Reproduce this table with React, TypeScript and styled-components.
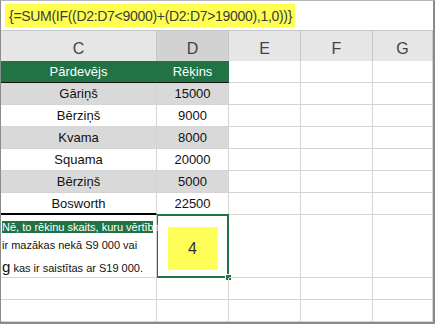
import React from 'react';
import styled, { createGlobalStyle } from 'styled-components';

type Fill = 'none' | 'band' | 'green';
type Rule = 'grid' | 'dark' | 'thick';

const GREEN = '#217346';
const GRID = '#d4d4d4';

const GlobalStyle = createGlobalStyle`
    html, body {
        margin: 0;
        padding: 0;
        background: #ffffff;
    }
    body {
        font-family: 'Liberation Sans', Arial, sans-serif;
    }
`;

const Frame = styled.div`
    width: 435px;
    height: 324px;
    box-sizing: border-box;
    border-left: 1px solid #8c8c8c;
    border-top: 1px solid #b4b4b4;
    border-right: 2px solid #8a8a8a;
    border-bottom: 2px solid #8a8a8a;
    display: flex;
    flex-direction: column;
    background: #ffffff;
    overflow: hidden;
`;

const FormulaBar = styled.div`
    height: 30px;
    box-sizing: border-box;
    border-bottom: 1px solid #c6c6c6;
    padding: 3px 0 0 4px;
`;

const Formula = styled.span`
    display: inline-flex;
    align-items: center;
    height: 23px;
    padding: 0 3px 0 4px;
    background: #ffff4f;
    color: #3c3c3c;
    font-size: 14px;
    letter-spacing: -0.3px;
    white-space: nowrap;
`;

const Sheet = styled.div`
    display: grid;
    grid-template-columns: 156px 72px 72px 72px 1fr;
    grid-template-rows: 30px 22px repeat(6, 22px) 63px 22px 22px;
`;

const ColHeader = styled.div<{ $active?: boolean }>`
    box-sizing: border-box;
    display: flex;
    justify-content: center;
    align-items: center;
    padding-top: 6px;
    background: ${({ $active }) => ($active ? '#d2d2d2' : '#e6e6e6')};
    border-right: 1px solid #c8c8c8;
    color: #444444;
    font-size: 16px;
`;

const Cell = styled.div<{ $fill?: Fill; $rule?: Rule; $bold?: boolean }>`
    box-sizing: border-box;
    display: flex;
    justify-content: center;
    align-items: center;
    position: relative;
    font-size: 13px;
    color: ${({ $fill }) => ($fill === 'green' ? '#ffffff' : '#111111')};
    background: ${({ $fill }) => ($fill === 'band' ? '#d9d9d9' : $fill === 'green' ? GREEN : 'transparent')};
    border-right: 1px solid ${({ $fill }) => ($fill === 'green' ? GREEN : GRID)};
    border-bottom: ${({ $rule }) =>
        $rule === 'thick' ? '2px solid #000000' : $rule === 'dark' ? '1px solid #111111' : `1px solid ${GRID}`};
`;

const Note = styled.div`
    box-sizing: border-box;
    display: flex;
    flex-direction: column;
    padding: 6px 0 0 1px;
    border-right: 1px solid ${GRID};
    border-bottom: 1px solid ${GRID};
    font-size: 11px;
    color: #111111;
    position: relative;
    z-index: 1;
`;

const NoteLead = styled.div`
    width: 151px;
    height: 12px;
    line-height: 12px;
    white-space: nowrap;
    color: #ffffff;
    background: linear-gradient(${GREEN}, ${GREEN}) no-repeat;
    background-size: 151px 100%;
`;

const NoteLine = styled.div`
    margin-top: 2px;
    height: 20px;
    line-height: 20px;
    white-space: nowrap;
`;

const BigG = styled.span`
    font-size: 15px;
`;

const ResultCell = styled.div`
    box-sizing: border-box;
    position: relative;
    display: flex;
    justify-content: center;
    align-items: flex-start;
    padding-top: 12px;
    border-right: 1px solid ${GRID};
    border-bottom: 1px solid ${GRID};
`;

const Highlight = styled.div`
    width: 50px;
    height: 43px;
    background: #ffff59;
    display: flex;
    justify-content: center;
    align-items: center;
    font-size: 16px;
    color: #333333;
`;

const Selection = styled.div`
    position: absolute;
    top: -1px;
    left: -1px;
    right: -1px;
    bottom: -1px;
    border: 2px solid ${GREEN};
    pointer-events: none;
`;

const FillHandle = styled.div`
    position: absolute;
    right: -5px;
    bottom: -5px;
    width: 5px;
    height: 5px;
    background: ${GREEN};
    border: 1px solid #ffffff;
`;

const rows: [string, string][] = [
    ['Gāriņš', '15000'],
    ['Bērziņš', '9000'],
    ['Kvama', '8000'],
    ['Squama', '20000'],
    ['Bērziņš', '5000'],
    ['Bosworth', '22500'],
];

export default function App() {
    return (
        <>
            <GlobalStyle />
            <Frame>
                <FormulaBar>
                    <Formula>{'{=SUM(IF((D2:D7<9000)+(D2:D7>19000),1,0))}'}</Formula>
                </FormulaBar>
                <Sheet>
                    <ColHeader>C</ColHeader>
                    <ColHeader $active>D</ColHeader>
                    <ColHeader>E</ColHeader>
                    <ColHeader>F</ColHeader>
                    <ColHeader>G</ColHeader>

                    <Cell $fill='green' $rule='dark'>Pārdevējs</Cell>
                    <Cell $fill='green' $rule='dark'>Rēķins</Cell>
                    <Cell />
                    <Cell />
                    <Cell />

                    {rows.map(([name, amount], i) => {
                        const fill: Fill = i % 2 === 0 ? 'band' : 'none';
                        const last = i === rows.length - 1;
                        return (
                            <React.Fragment key={i}>
                                <Cell $fill={fill} $rule={last ? 'thick' : 'grid'}>
                                    {name}
                                </Cell>
                                <Cell $fill={fill}>{amount}</Cell>
                                <Cell />
                                <Cell />
                                <Cell />
                            </React.Fragment>
                        );
                    })}

                    <Note>
                        <NoteLead>Nē, to rēkinu skaits, kuru vērtības</NoteLead>
                        <NoteLine>ir mazākas nekā S9 000 vai</NoteLine>
                        <NoteLine>
                            <BigG>g</BigG> kas ir saistītas ar S19 000.
                        </NoteLine>
                    </Note>
                    <ResultCell>
                        <Highlight>4</Highlight>
                        <Selection>
                            <FillHandle />
                        </Selection>
                    </ResultCell>
                    <Cell />
                    <Cell />
                    <Cell />

                    {[0, 1].map((r) => (
                        <React.Fragment key={`tail-${r}`}>
                            <Cell />
                            <Cell />
                            <Cell />
                            <Cell />
                            <Cell />
                        </React.Fragment>
                    ))}
                </Sheet>
            </Frame>
        </>
    );
}
